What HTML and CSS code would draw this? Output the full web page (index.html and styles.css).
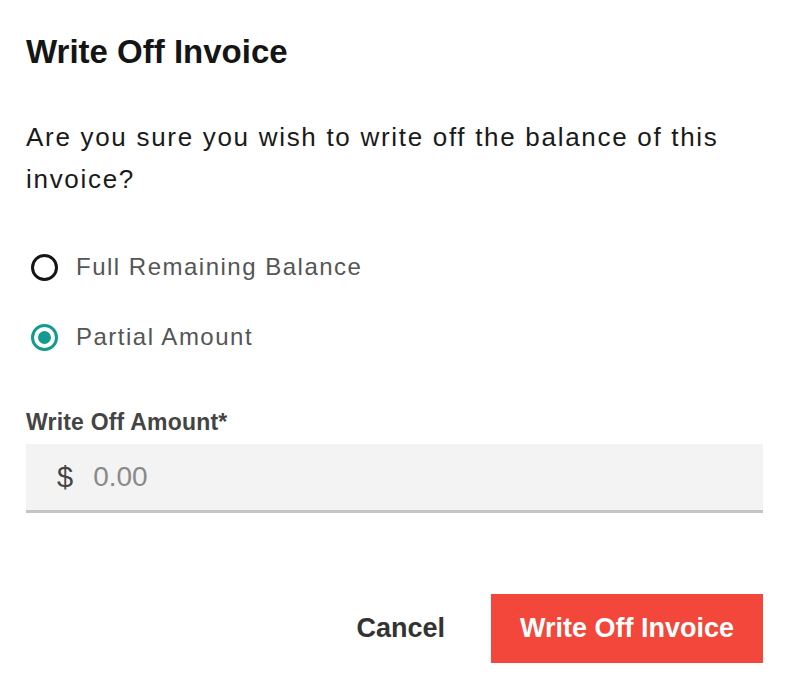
FILE: index.html
```html
<!DOCTYPE html>
<html lang="en">
<head>
  <meta charset="UTF-8">
  <meta name="viewport" content="width=device-width, initial-scale=1.0">
  <title>Write Off Invoice</title>
  <link rel="stylesheet" href="styles.css">
</head>
<body>
  <div class="dialog">
    <h1 class="dialog-title">Write Off Invoice</h1>

    <p class="dialog-text">Are you sure you wish to write off the balance of this invoice?</p>

    <div class="radio-group">
      <label class="radio-row">
        <input type="radio" name="mode" value="full">
        <span class="radio-mark"></span>
        <span class="radio-label">Full Remaining Balance</span>
      </label>
      <label class="radio-row">
        <input type="radio" name="mode" value="partial" checked>
        <span class="radio-mark"></span>
        <span class="radio-label">Partial Amount</span>
      </label>
    </div>

    <div class="field">
      <label class="field-label" for="amount">Write Off Amount*</label>
      <div class="amount-input">
        <span class="currency">$</span>
        <input id="amount" type="text" placeholder="0.00">
      </div>
    </div>

    <div class="actions">
      <button class="btn-cancel">Cancel</button>
      <button class="btn-primary">Write Off Invoice</button>
    </div>
  </div>
</body>
</html>
```

FILE: styles.css
```css
body {
  margin: 0;
  background-color: #ffffff;
  font-family: "Liberation Sans", Arial, sans-serif;
  color: #1a1a1a;
}
.dialog {
  padding: 32px 26px 27px 26px;
}
.dialog-title {
  margin: 0;
  font-size: 33px;
  line-height: 40px;
  font-weight: bold;
  color: #151515;
}
.dialog-text {
  margin: 44px 0 0 0;
  font-size: 26px;
  line-height: 42px;
  letter-spacing: 1.7px;
  color: #1a1a1a;
}
.radio-group {
  margin-top: 50px;
  display: flex;
  flex-direction: column;
  gap: 36px;
}
.radio-row {
  display: flex;
  align-items: center;
  gap: 18px;
  cursor: pointer;
  padding-left: 5px;
  height: 34px;
}
.radio-row input {
  display: none;
}
.radio-mark {
  width: 27px;
  height: 27px;
  box-sizing: border-box;
  border: 3px solid #151515;
  border-radius: 50%;
  position: relative;
}
.radio-row input:checked + .radio-mark {
  border-color: #139a92;
}
.radio-row input:checked + .radio-mark::after {
  content: "";
  position: absolute;
  left: 4px;
  top: 4px;
  width: 13px;
  height: 13px;
  border-radius: 50%;
  background-color: #139a92;
}
.radio-label {
  font-size: 24px;
  letter-spacing: 1.5px;
  color: #555555;
}
.field {
  margin-top: 54px;
}
.field-label {
  display: block;
  font-size: 23px;
  font-weight: bold;
  color: #444444;
  letter-spacing: 0.2px;
  line-height: 28px;
}
.amount-input {
  margin-top: 8px;
  display: flex;
  align-items: center;
  gap: 20px;
  height: 66px;
  padding-left: 31px;
  background-color: #f3f3f3;
  border-bottom: 3px solid #c4c4c4;
}
.currency {
  font-size: 29px;
  color: #444444;
}
.amount-input input {
  flex: 1;
  border: none;
  background: transparent;
  outline: none;
  padding: 0;
  font-family: "Liberation Sans", Arial, sans-serif;
  font-size: 28px;
  color: #333333;
}
.amount-input input::placeholder {
  color: #8a8a8a;
}
.actions {
  margin-top: 81px;
  display: flex;
  justify-content: flex-end;
  align-items: center;
  gap: 46px;
}
.btn-cancel {
  border: none;
  background: none;
  padding: 0;
  font-family: "Liberation Sans", Arial, sans-serif;
  font-size: 27px;
  font-weight: bold;
  color: #333333;
}
.btn-primary {
  width: 272px;
  height: 69px;
  border: none;
  background-color: #f2473a;
  color: #ffffff;
  font-family: "Liberation Sans", Arial, sans-serif;
  font-size: 27px;
  font-weight: bold;
}
```
